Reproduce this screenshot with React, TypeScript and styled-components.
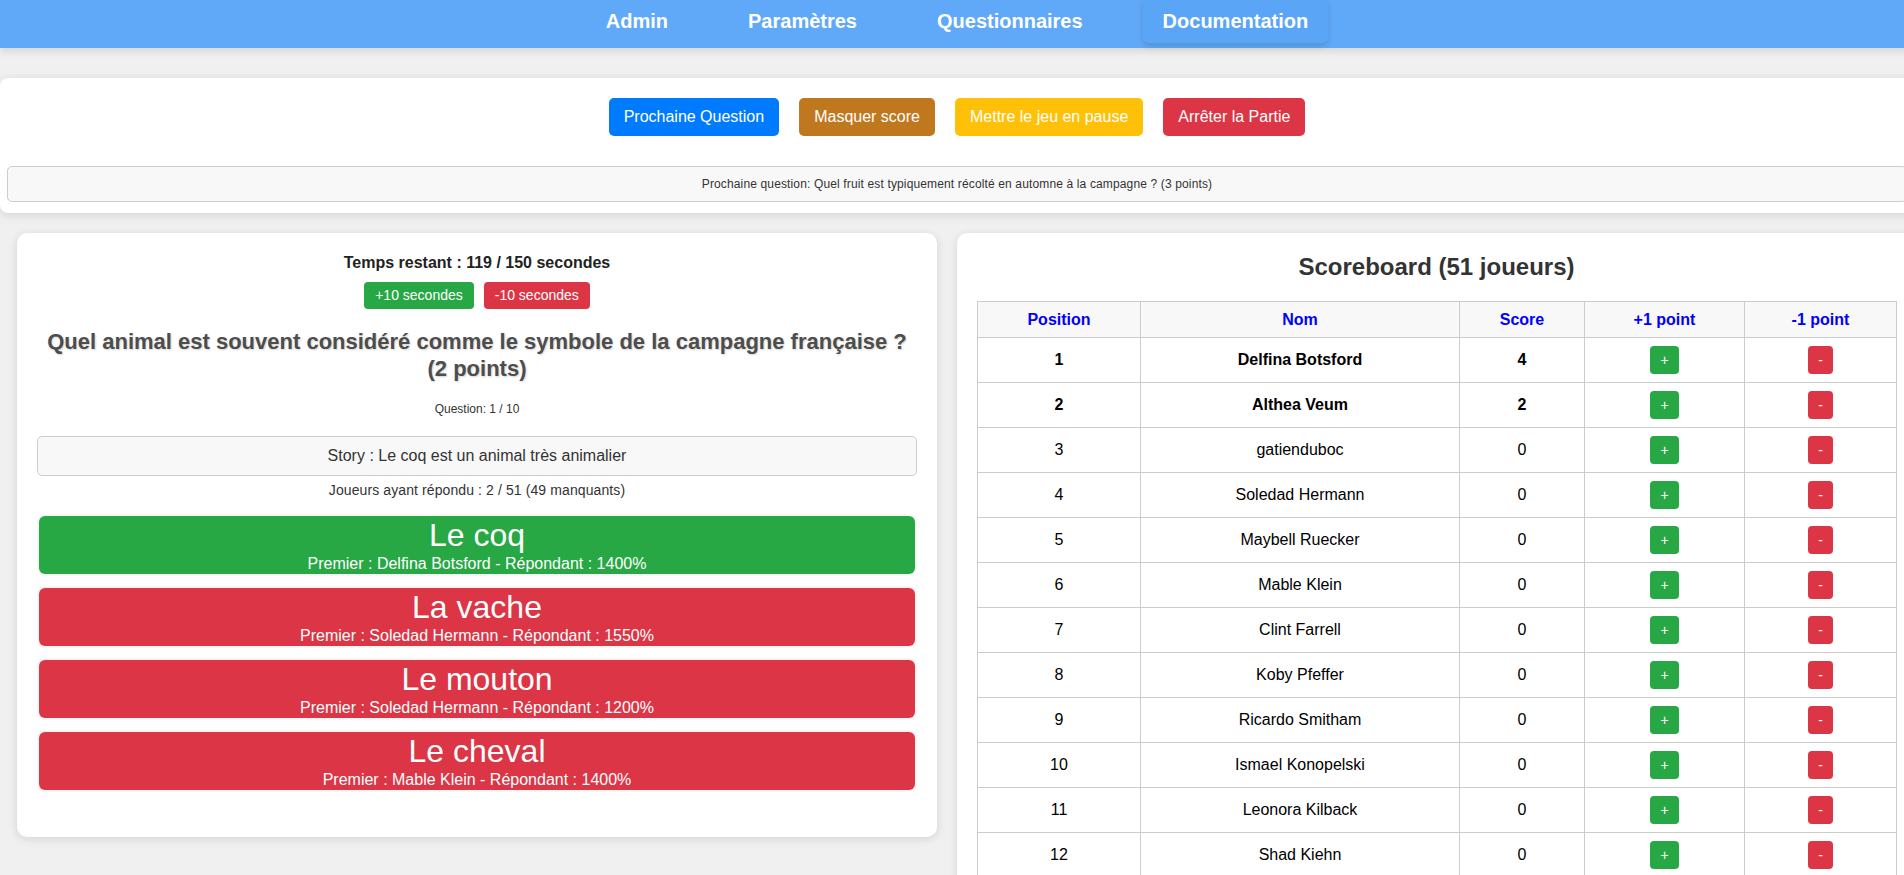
import React from "react";
import styled, { createGlobalStyle } from "styled-components";

const GlobalStyle = createGlobalStyle`
  html {
    overflow: hidden;
  }
  body {
    margin: 0;
    background: #f0f0f0;
    font-family: "Liberation Sans", Arial, sans-serif;
    color: #333;
  }
  * {
    box-sizing: border-box;
  }
`;

const Page = styled.div`
  width: 1914px;
`;

const NavBar = styled.nav`
  height: 48px;
  background: #60a9f8;
  display: flex;
  justify-content: center;
  align-items: flex-start;
  gap: 40px;
  box-shadow: 0 3px 8px rgba(0, 0, 0, 0.12);
`;

const NavItem = styled.a<{ $active?: boolean }>`
  height: 43px;
  line-height: 43px;
  padding: 0 20px;
  font-size: 20px;
  font-weight: 700;
  color: #fff;
  text-decoration: none;
  border-radius: 0 0 6px 6px;
  background: ${(p) => (p.$active ? "#5aa5f6" : "transparent")};
  box-shadow: ${(p) => (p.$active ? "0 3px 6px rgba(0, 0, 0, 0.14)" : "none")};
`;

const ControlCard = styled.section`
  margin-top: 30px;
  background: #fff;
  border-radius: 8px;
  box-shadow: 0 2px 10px rgba(0, 0, 0, 0.12);
  padding: 20px 7px 11px;
`;

const ButtonRow = styled.div`
  display: flex;
  justify-content: center;
  gap: 20px;
`;

const ActionButton = styled.button<{ $bg: string }>`
  border: none;
  border-radius: 5px;
  padding: 10px 15px;
  font-family: inherit;
  font-size: 16px;
  line-height: 18px;
  color: #fff;
  background: ${(p) => p.$bg};
  cursor: pointer;
`;

const NextQuestion = styled.div`
  margin-top: 30px;
  height: 36px;
  display: flex;
  align-items: center;
  justify-content: center;
  background: #f8f8f8;
  border: 1px solid #ccc;
  border-radius: 5px;
  font-size: 12px;
  letter-spacing: 0.14px;
  color: #333;
`;

const Columns = styled.div`
  display: flex;
  align-items: flex-start;
  gap: 20px;
  padding: 20px 0 0 17px;
`;

const Card = styled.section<{ $width: number }>`
  flex: none;
  width: ${(p) => p.$width}px;
  background: #fff;
  border-radius: 10px;
  box-shadow: 0 2px 10px rgba(0, 0, 0, 0.12);
  padding: 20px;
  text-align: center;
`;

const GameCard = styled(Card)`
  padding-bottom: 45px;
`;

const Timer = styled.div`
  font-size: 16px;
  font-weight: 700;
  line-height: 18px;
  color: #222;
  margin-top: 1px;
`;

const TimeButtons = styled.div`
  display: flex;
  justify-content: center;
  gap: 10px;
  margin-top: 10px;
`;

const TimeButton = styled.button<{ $bg: string }>`
  border: none;
  border-radius: 4px;
  padding: 5px 11px;
  font-family: inherit;
  font-size: 14px;
  line-height: 17px;
  color: #fff;
  background: ${(p) => p.$bg};
`;

const QuestionTitle = styled.h2`
  margin: 19px 0 0;
  font-size: 22px;
  line-height: 27px;
  font-weight: 700;
  color: #4d4d4d;
  text-shadow: 1px 1px 2px rgba(0, 0, 0, 0.18);
`;

const QuestionCount = styled.div`
  margin-top: 20px;
  font-size: 12px;
  line-height: 14px;
  color: #333;
`;

const Story = styled.div`
  margin-top: 20px;
  padding: 10px;
  background: #f8f8f8;
  border: 1px solid #ccc;
  border-radius: 5px;
  font-size: 16px;
  line-height: 18px;
  color: #333;
`;

const Answered = styled.div`
  margin-top: 6px;
  font-size: 14px;
  line-height: 16px;
  letter-spacing: 0.1px;
  color: #333;
`;

const AnswerList = styled.div`
  margin-top: 16px;
  display: flex;
  flex-direction: column;
  gap: 10px;
`;

const AnswerBox = styled.div<{ $correct: boolean }>`
  border: 2px solid rgba(0, 0, 0, 0.035);
  border-radius: 8px;
  background: ${(p) => (p.$correct ? "#28a745" : "#dc3545")};
  background-clip: padding-box;
  color: #fff;
  padding: 1px 0;
`;

const AnswerLabel = styled.div`
  font-size: 32px;
  line-height: 37px;
`;

const AnswerMeta = styled.div`
  font-size: 16px;
  line-height: 19px;
`;

const ScoreTitle = styled.h2`
  margin: 0;
  font-size: 24px;
  line-height: 28px;
  font-weight: 700;
  color: #333;
`;

const Table = styled.table`
  margin-top: 20px;
  width: 919px;
  border-collapse: collapse;
  table-layout: fixed;
`;

const HeadCell = styled.th`
  padding: 8px;
  line-height: 19px;
  font-size: 16px;
  font-weight: 700;
  color: #0000ff;
  background: #f8f8f8;
  border: 1px solid #ccc;
`;

const Cell = styled.td<{ $bold?: boolean }>`
  padding: 8px;
  line-height: 18px;
  font-size: 16px;
  font-weight: ${(p) => (p.$bold ? 700 : 400)};
  color: #000;
  border: 1px solid #ccc;
  text-align: center;
`;

const MiniButton = styled.button<{ $bg: string }>`
  border: none;
  border-radius: 4px;
  padding: 6px 10px;
  min-width: 24px;
  font-family: inherit;
  font-size: 14px;
  line-height: 16px;
  color: #fff;
  background: ${(p) => p.$bg};
  vertical-align: middle;
`;

const answers = [
  { label: "Le coq", first: "Delfina Botsford", pct: "1400%", correct: true },
  { label: "La vache", first: "Soledad Hermann", pct: "1550%", correct: false },
  { label: "Le mouton", first: "Soledad Hermann", pct: "1200%", correct: false },
  { label: "Le cheval", first: "Mable Klein", pct: "1400%", correct: false },
];

const players = [
  { name: "Delfina Botsford", score: 4 },
  { name: "Althea Veum", score: 2 },
  { name: "gatienduboc", score: 0 },
  { name: "Soledad Hermann", score: 0 },
  { name: "Maybell Ruecker", score: 0 },
  { name: "Mable Klein", score: 0 },
  { name: "Clint Farrell", score: 0 },
  { name: "Koby Pfeffer", score: 0 },
  { name: "Ricardo Smitham", score: 0 },
  { name: "Ismael Konopelski", score: 0 },
  { name: "Leonora Kilback", score: 0 },
  { name: "Shad Kiehn", score: 0 },
];

export default function App() {
  return (
    <Page>
      <GlobalStyle />
      <NavBar>
        <NavItem href="#">Admin</NavItem>
        <NavItem href="#">Paramètres</NavItem>
        <NavItem href="#">Questionnaires</NavItem>
        <NavItem href="#" $active>
          Documentation
        </NavItem>
      </NavBar>

      <ControlCard>
        <ButtonRow>
          <ActionButton $bg="#007bff">Prochaine Question</ActionButton>
          <ActionButton $bg="#bf781e">Masquer score</ActionButton>
          <ActionButton $bg="#ffc107">Mettre le jeu en pause</ActionButton>
          <ActionButton $bg="#dc3545">Arrêter la Partie</ActionButton>
        </ButtonRow>
        <NextQuestion>
          Prochaine question: Quel fruit est typiquement récolté en automne à la campagne ? (3 points)
        </NextQuestion>
      </ControlCard>

      <Columns>
        <GameCard $width={920}>
          <Timer>Temps restant : 119 / 150 secondes</Timer>
          <TimeButtons>
            <TimeButton $bg="#28a745">+10 secondes</TimeButton>
            <TimeButton $bg="#dc3545">-10 secondes</TimeButton>
          </TimeButtons>
          <QuestionTitle>
            Quel animal est souvent considéré comme le symbole de la campagne française ? (2 points)
          </QuestionTitle>
          <QuestionCount>Question: 1 / 10</QuestionCount>
          <Story>Story : Le coq est un animal très animalier</Story>
          <Answered>Joueurs ayant répondu : 2 / 51 (49 manquants)</Answered>
          <AnswerList>
            {answers.map((a) => (
              <AnswerBox key={a.label} $correct={a.correct}>
                <AnswerLabel>{a.label}</AnswerLabel>
                <AnswerMeta>
                  Premier : {a.first} - Répondant : {a.pct}
                </AnswerMeta>
              </AnswerBox>
            ))}
          </AnswerList>
        </GameCard>

        <Card $width={959}>
          <ScoreTitle>Scoreboard (51 joueurs)</ScoreTitle>
          <Table>
            <colgroup>
              <col style={{ width: 163 }} />
              <col style={{ width: 319 }} />
              <col style={{ width: 125 }} />
              <col style={{ width: 160 }} />
              <col style={{ width: 152 }} />
            </colgroup>
            <thead>
              <tr>
                <HeadCell>Position</HeadCell>
                <HeadCell>Nom</HeadCell>
                <HeadCell>Score</HeadCell>
                <HeadCell>+1 point</HeadCell>
                <HeadCell>-1 point</HeadCell>
              </tr>
            </thead>
            <tbody>
              {players.map((p, i) => {
                const bold = p.score > 0;
                return (
                  <tr key={p.name}>
                    <Cell $bold={bold}>{i + 1}</Cell>
                    <Cell $bold={bold}>{p.name}</Cell>
                    <Cell $bold={bold}>{p.score}</Cell>
                    <Cell>
                      <MiniButton $bg="#28a745">+</MiniButton>
                    </Cell>
                    <Cell>
                      <MiniButton $bg="#dc3545">-</MiniButton>
                    </Cell>
                  </tr>
                );
              })}
            </tbody>
          </Table>
        </Card>
      </Columns>
    </Page>
  );
}
